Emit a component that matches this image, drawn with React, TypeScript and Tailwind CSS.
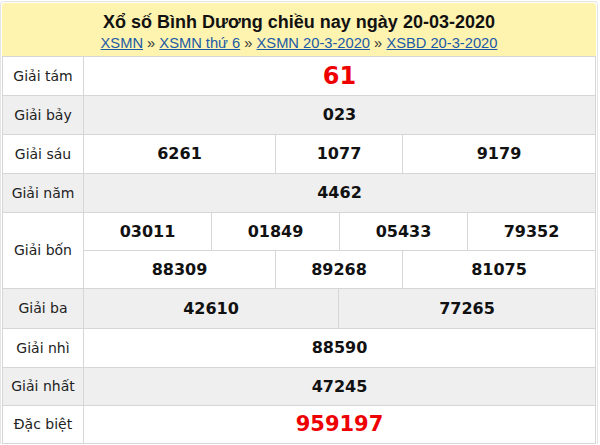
import React from "react";

const B = "border-[#d6d6d6]";

function Label({ text }: { text: string }) {
  return (
    <div className={`w-[81px] shrink-0 border-r ${B} flex items-center justify-center text-[14px] text-[#222]`}>
      {text}
    </div>
  );
}

function Cell({ w, children, last, red, big }: { w: string; children: React.ReactNode; last?: boolean; red?: boolean; big?: string }) {
  return (
    <div
      className={`${w} flex items-center justify-center font-bold ${last ? "" : `border-r ${B}`} ${red ? "text-[#ee0000]" : "text-[#111]"} ${big ?? "text-[16px]"}`}
    >
      {children}
    </div>
  );
}

function Row({ label, h, gray, last, children }: { label: string; h: string; gray?: boolean; last?: boolean; children: React.ReactNode }) {
  return (
    <div className={`flex ${h} ${gray ? "bg-[#efefef]" : "bg-white"} ${last ? "" : `border-b ${B}`}`}>
      <Label text={label} />
      <div className="flex flex-1">{children}</div>
    </div>
  );
}

export default function App() {
  const sans = { fontFamily: '"DejaVu Sans", Verdana, sans-serif' };
  const arial = { fontFamily: '"Liberation Sans", Arial, sans-serif' };
  return (
    <div className="w-[600px] h-[445px] bg-white pt-[1px]">
      <div className="w-[598px] border-x border-t border-[#e4e4e4] rounded-t-[4px] p-[1px] pb-0">
        <div className="h-[53px] bg-[#fff3b0] rounded-t-[3px] flex flex-col items-center pt-[9px]" style={arial}>
          <div className="text-[18px] font-bold text-[#111] leading-[21px]">
            Xổ số Bình Dương chiều nay ngày 20-03-2020
          </div>
          <div className="text-[14.7px] leading-[18px] text-[#333] mt-[1px]">
            <a className="text-[#1a5aa6] underline">XSMN</a> » <a className="text-[#1a5aa6] underline">XSMN thứ 6</a> »{" "}
            <a className="text-[#1a5aa6] underline">XSMN 20-3-2020</a> » <a className="text-[#1a5aa6] underline">XSBD 20-3-2020</a>
          </div>
        </div>
        <div className={`w-[594px] border ${B}`} style={sans}>
          <Row label="Giải tám" h="h-[39px]">
            <Cell w="flex-1" last red big="text-[24px]">61</Cell>
          </Row>
          <Row label="Giải bảy" h="h-[39px]" gray>
            <Cell w="flex-1" last>023</Cell>
          </Row>
          <Row label="Giải sáu" h="h-[39px]">
            <Cell w="w-[192px]">6261</Cell>
            <Cell w="w-[127px]">1077</Cell>
            <Cell w="w-[192px]" last>9179</Cell>
          </Row>
          <Row label="Giải năm" h="h-[39px]" gray>
            <Cell w="flex-1" last>4462</Cell>
          </Row>
          <div className={`flex h-[76px] bg-white border-b ${B}`}>
            <Label text="Giải bốn" />
            <div className="flex flex-1 flex-col">
              <div className={`flex h-[38px] border-b ${B}`}>
                <Cell w="w-[128px]">03011</Cell>
                <Cell w="w-[128px]">01849</Cell>
                <Cell w="w-[128px]">05433</Cell>
                <Cell w="w-[127px]" last>79352</Cell>
              </div>
              <div className="flex flex-1">
                <Cell w="w-[192px]">88309</Cell>
                <Cell w="w-[127px]">89268</Cell>
                <Cell w="w-[192px]" last>81075</Cell>
              </div>
            </div>
          </div>
          <Row label="Giải ba" h="h-[40px]" gray>
            <Cell w="w-[255px]">42610</Cell>
            <Cell w="w-[256px]" last>77265</Cell>
          </Row>
          <Row label="Giải nhì" h="h-[39px]">
            <Cell w="flex-1" last>88590</Cell>
          </Row>
          <Row label="Giải nhất" h="h-[38px]" gray>
            <Cell w="flex-1" last>47245</Cell>
          </Row>
          <Row label="Đặc biệt" h="h-[37px]" last>
            <Cell w="flex-1" last red big="text-[21px]">959197</Cell>
          </Row>
        </div>
      </div>
    </div>
  );
}
